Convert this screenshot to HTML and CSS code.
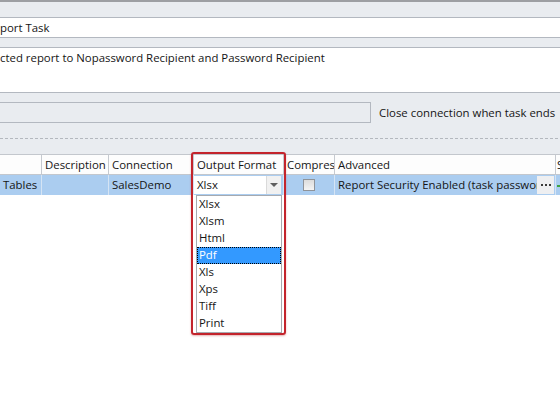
FILE: index.html
```html
<!DOCTYPE html>
<html>
<head>
<meta charset="utf-8">
<link rel="stylesheet" href="styles.css">
</head>
<body>
<div class="app">
  <div class="form">
    <div class="field single"><span class="txt">port Task</span></div>
    <div class="field multi"><span class="txt">cted report to Nopassword Recipient and Password Recipient</span></div>
    <div class="conn-row">
      <div class="field disabled"></div>
      <span class="label">Close connection when task ends</span>
    </div>
    <div class="dashed"></div>
  </div>
  <div class="grid">
    <div class="row hdr">
      <div class="cell c1"></div>
      <div class="cell c2">Description</div>
      <div class="cell c3">Connection</div>
      <div class="cell c4">Output Format</div>
      <div class="cell c5">Compres</div>
      <div class="cell c6">Advanced</div>
      <div class="cell c7">S</div>
    </div>
    <div class="row sel">
      <div class="cell c1">Tables</div>
      <div class="cell c2"></div>
      <div class="cell c3">SalesDemo</div>
      <div class="cell c4 combo-cell">
        <div class="combo"><span class="combo-val">Xlsx</span><span class="combo-btn"><span class="tri"></span></span></div>
      </div>
      <div class="cell c5 chk-cell"><span class="chk"></span></div>
      <div class="cell c6 adv"><span class="adv-txt">Report Security Enabled (task passwor</span><span class="ell"><i></i><i></i><i></i></span></div>
      <div class="cell c7"><span class="green"></span></div>
    </div>
  </div>
  <ul class="dropdown">
    <li>Xlsx</li>
    <li>Xlsm</li>
    <li>Html</li>
    <li class="hl">Pdf</li>
    <li>Xls</li>
    <li>Xps</li>
    <li>Tiff</li>
    <li>Print</li>
  </ul>
  <div class="annot"></div>
</div>
</body>
</html>
```
FILE: styles.css
```css
* { box-sizing: border-box; }
html, body { margin: 0; padding: 0; }
body {
  width: 560px;
  height: 420px;
  overflow: hidden;
  background: #ffffff;
  font-family: "Open Sans", "Noto Sans", sans-serif;
  font-size: 11.4px;
  color: #151515;
}
.app {
  position: relative;
  width: 560px;
  height: 420px;
  overflow: hidden;
}
.form {
  background: #e9ecf0;
  border-top: 2px solid #9d9fa3;
  padding-top: 15px;
  padding-bottom: 15px;
}
.field {
  background: #ffffff;
  border-top: 1px solid #b3b8c0;
  border-bottom: 1px solid #b3b8c0;
  width: 600px;
}
.field .txt { display: block; white-space: nowrap; line-height: 18px; }
.single { height: 21px; }
.single .txt { line-height: 19px; }
.multi { height: 46px; margin-top: 9px; }
.multi .txt { padding-top: 1px; }
.conn-row {
  display: flex;
  align-items: center;
  margin-top: 9px;
}
.disabled {
  width: 371px;
  height: 21px;
  background: #e9ecf0;
  border-right: 1px solid #b3b8c0;
  flex: none;
}
.label { margin-left: 8px; white-space: nowrap; }
.dashed {
  margin-top: 15px;
  height: 1px;
  background: repeating-linear-gradient(90deg, #b4b8be 0 3px, transparent 3px 5px);
}
.grid { background: #ffffff; }
.row {
  display: grid;
  grid-template-columns: 42px 67px 85px 90px 51px 221px 1fr;
  height: 21px;
}
.hdr {
  border-top: 1px solid #c3c7cd;
  border-bottom: 1px solid #c3c7cd;
  background: #fdfdfd;
}
.cell {
  border-right: 1px solid #c6cad0;
  padding-left: 3px;
  white-space: nowrap;
  overflow: hidden;
  line-height: 19px;
}
.sel { background: #abcdf0; height: 20px; }
.sel .cell { border-right-color: #d5e4f4; line-height: 20px; }
.c7 { border-right: none; padding-left: 1px; }
.combo-cell { padding: 1px 2px 1px 0; }
.combo {
  display: flex;
  height: 18px;
  background: #ffffff;
}
.combo-val { flex: 1; padding-left: 3px; line-height: 18px; }
.combo-btn {
  width: 15px;
  background: #f1f1f1;
  border-left: 1px solid #dadada;
  display: flex;
  align-items: center;
  justify-content: center;
}
.tri {
  width: 0; height: 0;
  border-left: 4px solid transparent;
  border-right: 4px solid transparent;
  border-top: 4px solid #606060;
}
.chk-cell { display: flex; align-items: center; justify-content: center; padding-left: 0; }
.chk {
  width: 12px; height: 12px;
  border: 1px solid #8f9399;
  background: linear-gradient(#dcdcdc, #f4f4f4);
}
.adv { display: flex; padding-right: 1px; }
.adv-txt { width: 199px; overflow: hidden; flex: none; }
.ell {
  width: 17px;
  margin: 1px 0;
  background: #eeeff1;
  display: flex;
  align-items: center;
  justify-content: center;
  gap: 2px;
}
.ell i {
  display: block;
  width: 2px;
  height: 2px;
  background: #3a3a3a;
}
.green {
  display: inline-block;
  width: 4px; height: 2px;
  background: #3fa33f;
  margin-top: 10px;
  vertical-align: top;
}
.dropdown {
  position: absolute;
  left: 196px;
  top: 195px;
  width: 86px;
  height: 138px;
  margin: 0;
  padding: 0;
  list-style: none;
  background: #ffffff;
  border: 1px solid #a6aab0;
}
.dropdown li {
  height: 17px;
  line-height: 16px;
  padding-left: 2px;
}
.dropdown li.hl {
  background: #3399ff;
  color: #ffffff;
  outline: 1px dotted #000;
  outline-offset: -1px;
}
.annot {
  position: absolute;
  left: 191px;
  top: 152px;
  width: 95px;
  height: 183px;
  border: 2px solid #c3242c;
  border-radius: 3px;
  box-shadow: 0 1px 2px rgba(180, 40, 40, 0.35);
}
```
